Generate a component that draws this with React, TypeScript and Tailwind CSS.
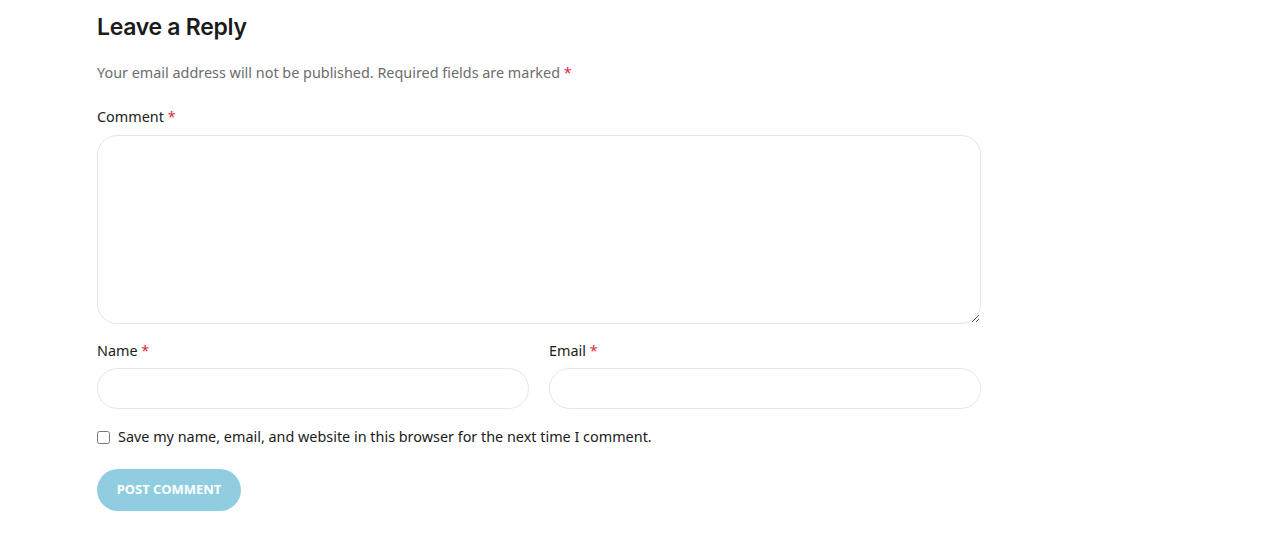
export default function App() {
  const body = { fontFamily: '"Noto Sans", "Open Sans", sans-serif' };
  const Req = () => <span className="text-[#e2263a]">*</span>;
  return (
    <div className="min-h-[549px] bg-white" style={body}>
      <div className="w-[884px] ml-[97px] pt-[10px]">
        <h3
          className="text-[23px] leading-[34px] font-semibold text-[#1b1b1b] tracking-[-0.3px]"
          style={{ fontFamily: '"Inter", "Noto Sans", sans-serif' }}
        >
          Leave a Reply
        </h3>
        <p className="mt-[17px] text-[14.4px] leading-[24px] text-[#6c6c6c]">
          Your email address will not be published. Required fields are marked <Req />
        </p>
        <form className="mt-[20px]" onSubmit={(e) => e.preventDefault()}>
          <label className="block text-[14.4px] leading-[24px] text-[#1b1b1b]">
            Comment <Req />
          </label>
          <textarea className="mt-[6px] block w-full h-[189px] rounded-[20px] border border-[#e6e6e6] bg-white outline-none px-4 py-3 resize-y" />
          <div className="mt-[15px] grid grid-cols-2 gap-[20px]">
            <div>
              <label className="block text-[14.4px] leading-[24px] text-[#1b1b1b]">
                Name <Req />
              </label>
              <input className="mt-[5px] block w-full h-[41px] rounded-full border border-[#e6e6e6] bg-white outline-none px-4" />
            </div>
            <div>
              <label className="block text-[14.4px] leading-[24px] text-[#1b1b1b]">
                Email <Req />
              </label>
              <input className="mt-[5px] block w-full h-[41px] rounded-full border border-[#e6e6e6] bg-white outline-none px-4" />
            </div>
          </div>
          <div className="mt-[16px] flex items-center gap-[8px]">
            <input type="checkbox" className="w-[13px] h-[13px] m-0" />
            <span className="text-[14.4px] leading-[24px] text-[#1b1b1b]">
              Save my name, email, and website in this browser for the next time I comment.
            </span>
          </div>
          <button
            type="submit"
            className="mt-[20px] h-[42px] w-[144px] rounded-full bg-[#90cde0] text-white text-[13px] font-bold uppercase"
          >
            Post Comment
          </button>
        </form>
      </div>
    </div>
  );
}
